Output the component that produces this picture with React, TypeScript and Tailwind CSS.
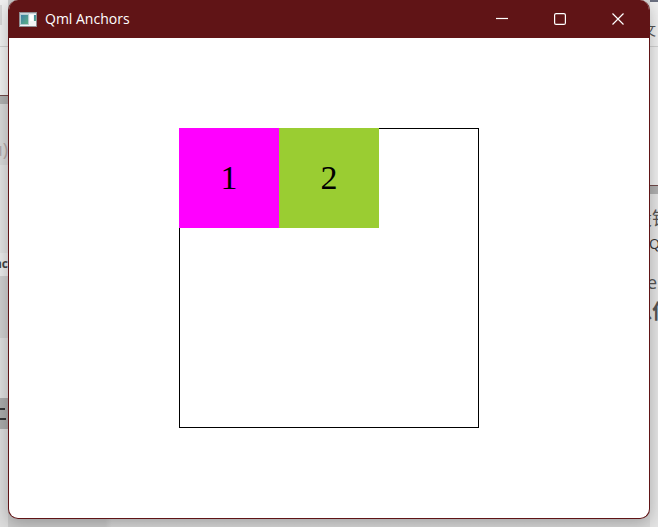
import React from 'react';

const AppIcon = () => (
  <svg width="18" height="15" viewBox="0 0 18 15" aria-hidden="true">
    <defs>
      <linearGradient id="pane" x1="0" y1="0" x2="1" y2="1">
        <stop offset="0" stopColor="#3f7fa6" />
        <stop offset="1" stopColor="#5cb184" />
      </linearGradient>
    </defs>
    <rect width="18" height="15" fill="#8f8d92" />
    <rect x="1" y="1" width="16" height="13" fill="#f2f4f5" />
    <rect x="1" y="1" width="16" height="1" fill="#c9d3da" />
    <rect x="1" y="2" width="9" height="11" fill="#b4cdd0" />
    <rect x="2" y="3" width="7" height="9" fill="url(#pane)" />
    <rect x="11" y="3" width="3" height="6" fill="#fff" />
    <rect x="15" y="3" width="2" height="6" fill="url(#pane)" />
  </svg>
);

const captionButtons = [
  { label: 'Minimize', shape: <path d="M0 5.5h12" /> },
  { label: 'Maximize', shape: <rect x="0.6" y="0.6" width="10.8" height="10.8" rx="1.5" /> },
  { label: 'Close', shape: <path d="M0.5 0.5l11 11M11.5 0.5l-11 11" /> },
];

const TitleBar = () => (
  <header className="flex h-[38px] shrink-0 items-center bg-[#601416] pr-[2px] pl-[10px] text-white">
    <AppIcon />
    <h1 className="ml-2 flex-1 font-['Open_Sans','Noto_Sans',sans-serif] text-sm leading-5">
      Qml Anchors
    </h1>
    {captionButtons.map(({ label, shape }) => (
      <button
        key={label}
        type="button"
        aria-label={label}
        className="flex h-full w-[58px] items-center justify-center"
      >
        <svg width="12" height="12" viewBox="0 0 12 12" fill="none" stroke="currentColor" strokeWidth="1.2">
          {shape}
        </svg>
      </button>
    ))}
  </header>
);

// The slices of the page behind the window that stay visible on each side
const LeftEdge = () => (
  <div className="flex w-2 shrink-0 flex-col overflow-hidden whitespace-nowrap font-['Open_Sans','Noto_Sans_CJK_SC',sans-serif]">
    <div className="h-[47px] shrink-0 border-b border-[#d0d0d0] bg-[#f0f0f0] pt-[5px]">
      <div className="h-5 w-[2px] bg-[#d8d8d8]" />
    </div>
    <div className="h-[49px] shrink-0 border-b border-[#704a4a] bg-[#f0f0f0]" />
    <div className="h-2 shrink-0 bg-[#b0b0b0]" />
    <div className="flex h-[61px] shrink-0 items-end justify-end bg-[#d8d8d8] pb-[2px] text-lg text-[#b4a8a8]">u)</div>
    <div className="h-[88px] shrink-0 bg-[#e2e2e2]" />
    <div className="flex h-[23px] shrink-0 items-center justify-end bg-[#eaeaea] pb-[2px] text-xs font-bold text-[#444]">nc</div>
    <div className="h-[62px] shrink-0 bg-[#cfcfcf]" />
    <div className="h-[60px] shrink-0 bg-[#dedede]" />
    <div className="flex h-[31px] shrink-0 flex-col gap-2 bg-[#aaa] pt-[10px]">
      <div className="h-[2px] w-[5px] bg-[#333]" />
      <div className="h-[2px] w-[6px] bg-[#333]" />
    </div>
    <div className="flex-1 bg-[#dcdcdc]" />
  </div>
);

const RightEdge = () => (
  <div className="flex w-2 shrink-0 flex-col overflow-hidden whitespace-nowrap font-['Open_Sans','Noto_Sans_CJK_SC',sans-serif] text-[#555]">
    <div className="flex h-[47px] shrink-0 items-end border-t-2 border-b border-t-[#6b7080] border-b-[#d0d0d0] bg-[#f0f0f0] text-sm leading-8">
      <span className="-ml-2">文</span>
    </div>
    <div className="h-[139px] shrink-0 border-b border-[#704a4a] bg-[#eee]" />
    <div className="h-2 shrink-0 bg-[#b0b0b0]" />
    <div className="flex flex-1 flex-col bg-[#e4e4e4]">
      <div className="mt-3 flex h-6 text-lg leading-6"><span className="-ml-4">设铅</span></div>
      <div className="mt-[2px] h-6 text-sm leading-6 text-[#333]"><span className="-ml-px">Q</span></div>
      <div className="mt-3 h-7 text-lg leading-7"><span className="-ml-[3px]">e.</span></div>
      <div className="mt-1 flex h-6 text-xl leading-6 font-bold"><span className="-ml-[18px]">以作</span></div>
    </div>
  </div>
);

const App = () => {
  return (
    <div className="flex min-h-screen flex-col bg-linear-to-r from-[#cacaca] from-16% to-[#d8d8d8] to-17%">
      <div className="flex flex-1">
        <LeftEdge />
        <div className="flex min-w-0 flex-1 flex-col pb-2">
          <div className="relative flex flex-1 flex-col overflow-hidden rounded-[10px] border border-t-0 border-[#601416] bg-white shadow-[0_4px_16px_rgba(0,0,0,0.25)]">
            <TitleBar />
            <main className="flex flex-1 items-center justify-center">
              <div className="size-[300px] border border-black">
                <div className="-mt-px -ml-px flex font-['Liberation_Serif',serif] text-[34px] leading-10 text-black">
                  <div className="flex size-[100px] items-center justify-center bg-[#ff00ff]">1</div>
                  <div className="flex size-[100px] items-center justify-center bg-[#9acd32]">2</div>
                </div>
              </div>
            </main>
          </div>
        </div>
        <RightEdge />
      </div>
    </div>
  );
};

export default App;
